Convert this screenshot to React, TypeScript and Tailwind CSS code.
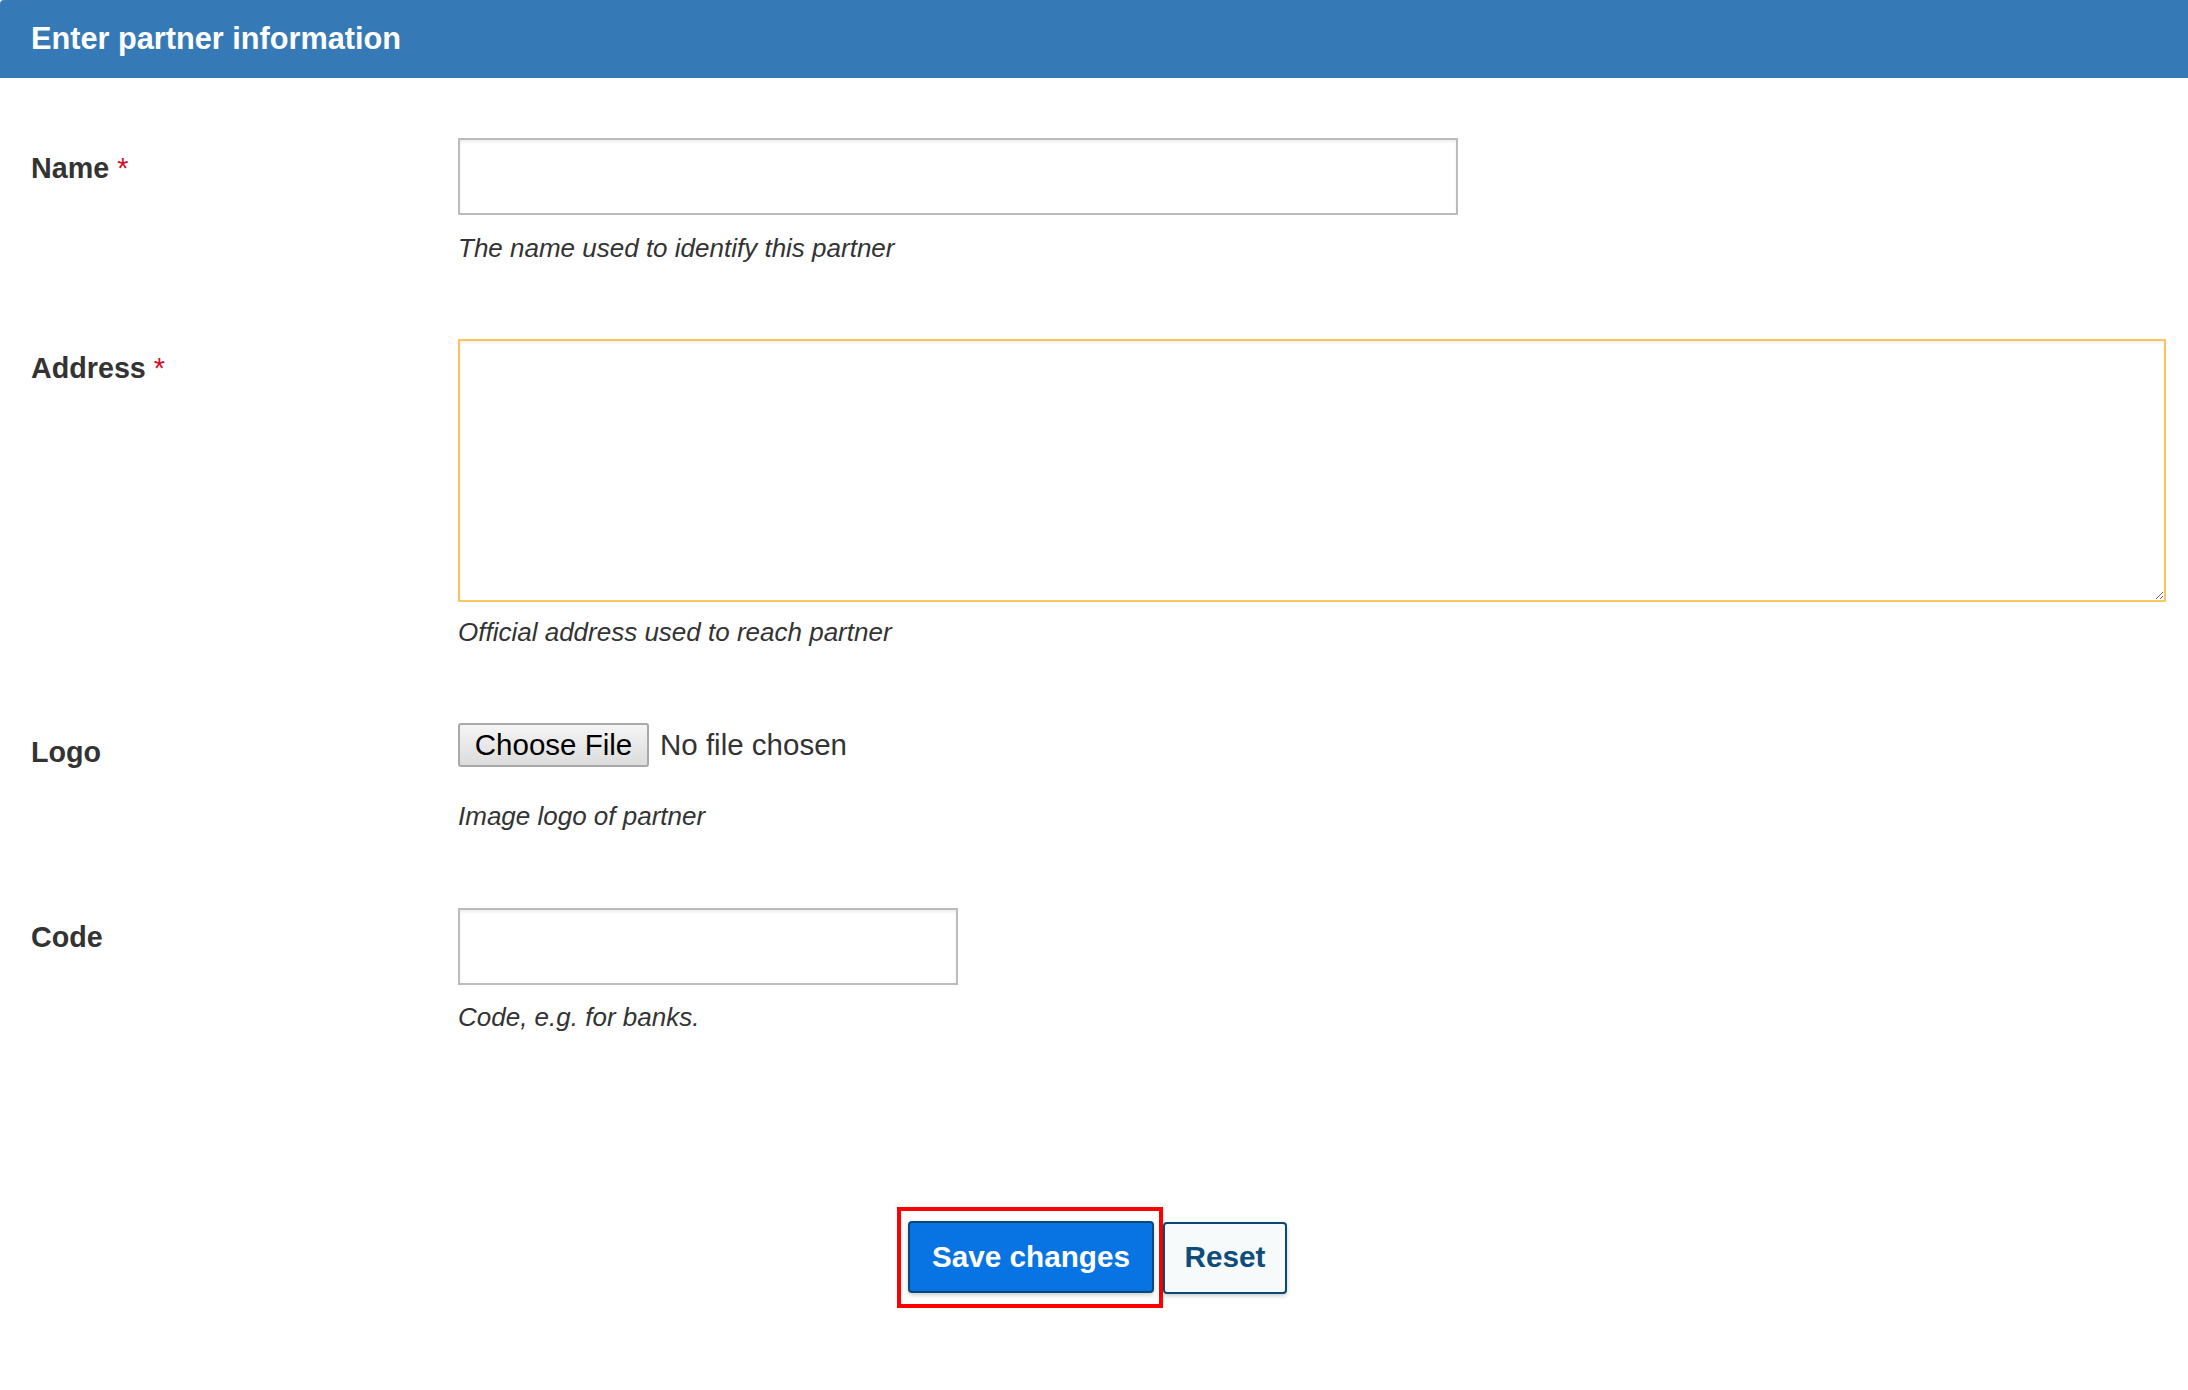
import { useState } from 'react';

type RowProps = {
  label: string;
  required?: boolean;
  labelPad: string;
  className: string;
  children: React.ReactNode;
};

function FormRow({ label, required, labelPad, className, children }: RowProps) {
  return (
    <div className={`flex ${className}`}>
      <div className={`w-[427px] shrink-0 text-[28.7px] font-bold leading-[40px] text-[#333] ${labelPad}`}>
        {label}
        {required && <span className="ml-[8px] font-normal text-[#d0112b]">*</span>}
      </div>
      <div className="min-w-0 flex-1">{children}</div>
    </div>
  );
}

function Help({ text, className }: { text: string; className: string }) {
  return <p className={`text-[26px] italic leading-[36px] text-[#333] ${className}`}>{text}</p>;
}

export default function App() {
  const [name, setName] = useState('');
  const [address, setAddress] = useState('');
  const [code, setCode] = useState('');

  return (
    <div className="min-h-[1390px] bg-white font-['Liberation_Sans',Arial,sans-serif] text-[#333]">
      {/* Header */}
      <div className="flex h-[78px] items-center rounded-tl-[4px] bg-[#357ab7] pl-[31px]">
        <h1 className="text-[30.7px] font-bold leading-[40px] text-white">Enter partner information</h1>
      </div>

      <form className="pl-[31px] pr-[22px]" onSubmit={(e) => e.preventDefault()}>
        <FormRow label="Name" required labelPad="pt-[10px]" className="mt-[60px]">
          <input
            value={name}
            onChange={(e) => setName(e.target.value)}
            className="block h-[77px] w-[1000px] border-2 border-[#bcbcbc] bg-white px-3 text-[26px] shadow-[inset_0_2px_3px_rgba(0,0,0,0.07)] outline-none"
          />
          <Help text="The name used to identify this partner" className="mt-[15px]" />
        </FormRow>

        <FormRow label="Address" required labelPad="pt-[9px]" className="mt-[73px]">
          <textarea
            value={address}
            onChange={(e) => setAddress(e.target.value)}
            className="block h-[263px] w-full border-2 border-[#fcc45e] bg-white px-3 py-2 text-[26px] shadow-[inset_0_2px_3px_rgba(0,0,0,0.06)] outline-none"
          />
          <Help text="Official address used to reach partner" className="mt-[12px]" />
        </FormRow>

        <FormRow label="Logo" labelPad="pt-[9px]" className="mt-[73px]">
          <label className="flex h-[44px] cursor-pointer items-center">
            <input type="file" className="hidden" />
            <span className="flex h-[44px] w-[191px] items-center justify-center rounded-[3px] border-2 border-[#a9a9a9] bg-gradient-to-b from-[#f5f5f5] to-[#dcdcdc] text-[29.5px] leading-none text-black">
              Choose File
            </span>
            <span className="ml-[11px] text-[29.5px] leading-none text-[#333]">No file chosen</span>
          </label>
          <Help text="Image logo of partner" className="mt-[31px]" />
        </FormRow>

        <FormRow label="Code" labelPad="pt-[9px]" className="mt-[74px]">
          <input
            value={code}
            onChange={(e) => setCode(e.target.value)}
            className="block h-[77px] w-[500px] border-2 border-[#bcbcbc] bg-white px-3 text-[26px] shadow-[inset_0_2px_3px_rgba(0,0,0,0.07)] outline-none"
          />
          <Help text="Code, e.g. for banks." className="mt-[14px]" />
        </FormRow>
      </form>

      {/* Actions */}
      <div className="mt-[172px] flex items-center justify-center pr-[4px]">
        <div className="border-4 border-[#ff0000] pb-[11px] pl-[7px] pr-[5px] pt-[10px]">
          <button
            type="submit"
            className="block h-[72px] w-[246px] rounded-[4px] border-2 border-[#0b4877] bg-[#0874e4] text-[29.7px] font-bold text-white shadow-[0_2px_4px_rgba(0,0,0,0.2)]"
          >
            Save changes
          </button>
        </div>
        <button
          type="reset"
          className="h-[72px] w-[124px] rounded-[4px] border-2 border-[#0b4877] bg-[#f7fafb] text-[29.7px] font-bold text-[#0f4c7c] shadow-[0_2px_4px_rgba(0,0,0,0.2)]"
        >
          Reset
        </button>
      </div>
    </div>
  );
}
